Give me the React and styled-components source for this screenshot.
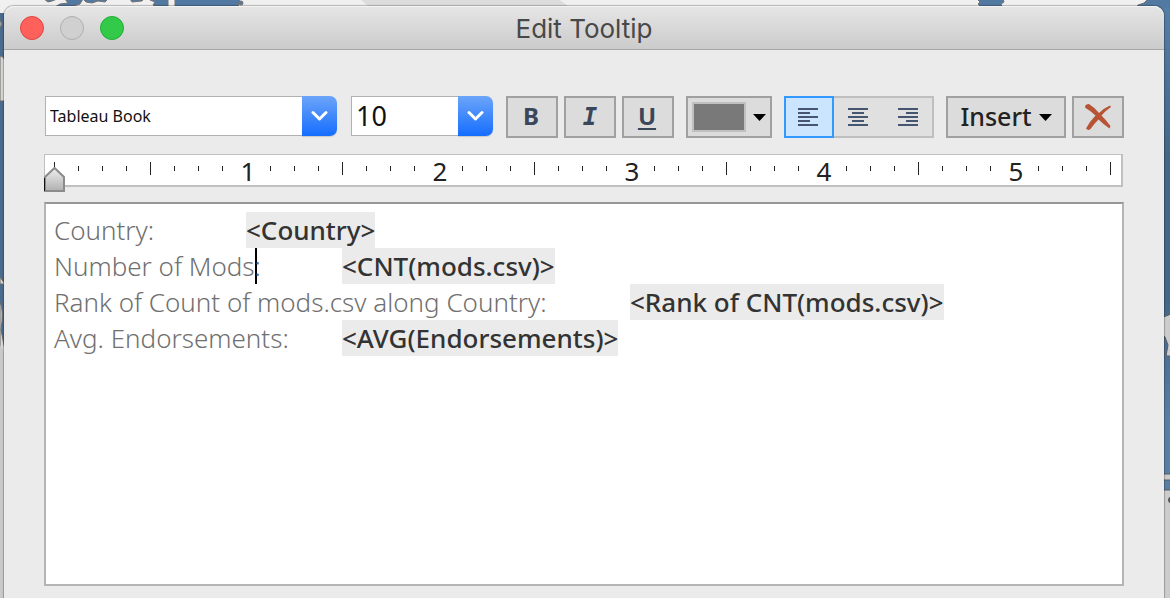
import React from "react";
import styled, { createGlobalStyle } from "styled-components";

const Global = createGlobalStyle`
  *, *::before, *::after { box-sizing: border-box; }
  body { margin: 0; background: #e2e2e2; font-family: "Noto Sans", "Open Sans", sans-serif; }
  button, input, select { font: inherit; color: inherit; margin: 0; }
`;

const Desktop = styled.div`
  position: relative;
  min-height: 100vh;
  padding: 6px 6px 0 4px;
  display: flex;
  overflow: hidden;
`;

const Backdrop = styled.svg`
  position: absolute;
  inset: 0;
  width: 100%;
  height: 100%;
`;

const Dialog = styled.main`
  position: relative;
  flex: 1;
  min-width: 0;
  display: flex;
  flex-direction: column;
  background: #ebebeb;
  border-radius: 10px 10px 0 0;
  box-shadow: 0 0 1px 1px rgba(0, 0, 0, 0.25);
`;

const TitleBar = styled.header`
  display: grid;
  grid-template-columns: 1fr auto 1fr;
  align-items: center;
  height: 44px;
  padding: 0 16px;
  border-radius: 10px 10px 0 0;
  border-bottom: 1px solid #a8a8a8;
  background: linear-gradient(#e6e6e6, #cbcbcb);
  box-shadow: inset 0 1px 0 #f4f4f4;
`;

const Lights = styled.div`
  display: flex;
  gap: 16px;
`;

const Light = styled.button`
  width: 24px;
  height: 24px;
  padding: 0;
  border-radius: 50%;
  border: 1px solid ${(p) => p.$edge};
  background: ${(p) => p.$fill};
`;

const Title = styled.h1`
  margin: 0;
  padding-top: 2px;
  font: 400 26px/32px Inter, sans-serif;
  color: #484848;
`;

const Body = styled.div`
  flex: 1;
  display: flex;
  flex-direction: column;
  padding: 46px 40px 12px;
`;

const Toolbar = styled.div`
  display: flex;
  align-items: flex-start;
  gap: 6px;
  height: 42px;
  padding-left: 1px;
`;

const Group = styled.div`
  display: flex;
  gap: 6px;
  margin-left: ${(p) => p.$lead || 0}px;
`;

const Combo = styled.div`
  display: flex;
  flex: none;
  width: ${(p) => p.$width}px;
  height: 40px;
  margin-right: 8px;
`;

const ComboInput = styled.input`
  flex: 1;
  min-width: 0;
  padding: 0 4px 1px;
  border: 1px solid #b1b1b1;
  border-right: 0;
  border-radius: 0;
  background: #fff;
  color: #111;
  font-size: ${(p) => p.$size}px;
  outline: 0;
`;

const ComboArrow = styled.button`
  display: grid;
  place-items: center;
  width: 35px;
  padding: 0;
  border: 0;
  border-radius: 0 7px 7px 0;
  background: linear-gradient(#6ca5f9, #156dfe);
  box-shadow: 0 1px 1px rgba(0, 0, 0, 0.15);
`;

const ToolButton = styled.button`
  display: flex;
  flex: none;
  align-items: center;
  justify-content: center;
  gap: 7px;
  width: ${(p) => p.$width || 52}px;
  height: 42px;
  padding: 0;
  border: 2px solid #a0a0a0;
  background: #dcdcdc;
  color: #222;
  font-size: 25px;
  font-weight: 500;
  line-height: 32px;
`;

const Label = styled.span`
  padding-bottom: 2px;
`;

const Swatch = styled.span`
  width: 54px;
  height: 30px;
  border: 2px solid #c0c0c0;
  background: #797979;
`;

const Segments = styled.div`
  display: flex;
  flex: none;
  width: 150px;
  height: 42px;
  border: 2px solid #bfbfbf;
  background: #e0e0e0;
`;

const Segment = styled.button`
  display: grid;
  place-items: center;
  flex: none;
  width: 50px;
  height: 42px;
  margin: -2px 0 0 ${(p) => (p.$first ? -2 : 0)}px;
  padding: 0 2px 0 0;
  border: 2px solid ${(p) => (p.$on ? "#3399ff" : "transparent")};
  background: ${(p) => (p.$on ? "#cce5ff" : "transparent")};
`;

const Ruler = styled.div`
  position: relative;
  height: 33px;
  margin: 16px 1px 0 0;
  border: solid #c0c0c0;
  border-width: 1px 2px 2px 1px;
  background: #fff;
`;

const Ticks = styled.div`
  display: flex;
  height: 27px;
  padding-left: 9px;
`;

const Tick = styled.span`
  flex: 0 0 24px;
  display: flex;
  align-items: center;
  &:last-child {
    flex-basis: 1px;
  }
  &::before {
    content: "";
    width: 1px;
    height: ${(p) => (p.$tall ? 13 : 5)}px;
    background: #222;
  }
`;

const Inch = styled.span`
  flex: 0 0 24px;
  display: flex;
  justify-content: center;
  margin-left: -10px;
  margin-right: 10px;
  color: #222;
  font-size: 26px;
  line-height: 32px;
`;

const Marker = styled.svg`
  position: absolute;
  left: -1px;
  top: 11px;
`;

const Editor = styled.div`
  flex: 1;
  margin-top: 15px;
  padding: 8px 8px;
  border: 2px solid #b5b5b5;
  border-top-color: #969696;
  background: #fff;
  color: #707070;
  font-size: 26px;
  font-weight: 300;
  line-height: 36px;
  outline: 0;
`;

const Line = styled.p`
  margin: 0;
  white-space: pre;
  tab-size: 96px;
`;

const Field = styled.span`
  display: inline-block;
  height: 36px;
  background: #ebebeb;
  color: #333;
  font-weight: 500;
  vertical-align: top;
`;

const Caret = styled.span`
  display: inline-block;
  width: 2px;
  height: 36px;
  margin-right: -2px;
  background: #000;
  vertical-align: top;
`;

const Chevron = () => (
  <svg width="17" height="12" viewBox="0 0 17 12" fill="none" stroke="#fff" strokeWidth="3" strokeLinecap="round" strokeLinejoin="round">
    <path d="M2 2.5 8.500 9 15 2.500" />
  </svg>
);

const Triangle = () => (
  <svg width="13" height="7" viewBox="0 0 13 7">
    <path d="M0 0H13L6.500 7Z" fill="#000" />
  </svg>
);

const Letter = styled.span`
  padding: 0 ${(p) => (p.$italic ? 0 : 2)}px ${(p) => (p.$italic ? 0 : 2)}px 0;
  color: #3a4659;
  font: ${(p) => (p.$italic ? "italic" : "normal")} 700 24px/30px "${(p) => (p.$italic ? "DejaVu Sans Mono" : "Noto Sans")}", sans-serif;
  text-decoration: ${(p) => (p.$underline ? "underline 2px" : "none")};
  text-underline-offset: 3px;
`;

const alignBars = {
  left: [[0, 20], [0, 12], [0, 20], [0, 12], [0, 20]],
  center: [[0, 20], [4, 12], [0, 20], [4, 12], [0, 20]],
  right: [[0, 20], [8, 12], [0, 20], [8, 12], [0, 20]],
};

const AlignIcon = ({ kind }) => (
  <svg width="20" height="18" viewBox="0 0 20 18" fill="#475670">
    {alignBars[kind].map(([x, w], i) => (
      <rect key={i} x={x} y={i * 4} width={w} height="2" />
    ))}
  </svg>
);

const MapArt = () => (
  <Backdrop viewBox="0 0 1170 598" preserveAspectRatio="none" aria-hidden="true">
    <defs>
      <linearGradient id="sea" x1="0" y1="0" x2="0" y2="1">
        <stop offset="0" stopColor="#557da5" />
        <stop offset="0.25" stopColor="#456687" />
        <stop offset="0.5" stopColor="#456687" />
        <stop offset="0.7" stopColor="#587ea3" />
        <stop offset="1" stopColor="#587ea3" />
      </linearGradient>
    </defs>
    <rect width="1170" height="598" fill="#f0f0f0" />
    <path d="M361 0H560L568 6H368Z" fill="#dcdcdc" />
    <g fill="#5279a1" stroke="#77716b" strokeWidth="1">
      <path d="M44 -1 48 2 52 1 57 -1ZM65 -1 68 3 60 4 55 7H70L80 4 83 -1ZM83 -1 86 2 92 3 98 1 105 2 108 -1ZM130 -1 132 2 142 1 144 -1ZM150 0 155 2 153 5 160 7H168V-1H158ZM175 -1V7H238L240 -1Z" />
      <circle cx="241" cy="3" r="2" />
      <path d="M977 -1 980 2 978 4 981 7H1002L1001 4 1004 2 1003 -1Z" />
      <path d="M1148 -1 1144 3 1138 5 1136 8H1150V12H1170V-1Z" />
    </g>
    <rect x="1150" y="8" width="20" height="590" fill="url(#sea)" />
    <path d="M0 13H6V352L0 345Z" fill="#4a6b8e" />
    <path d="M0 20 2 24 0 28ZM0 56Q4 56 5 62V101H0ZM0 277 5 284H0ZM0 302Q4 310 1 330L5 350V402H0Z" fill="#d5d5d2" stroke="#6b6b6b" />
    <path d="M0 345 6 356V598H0Z" fill="#c9c9c9" />
    <path d="M1171 314 1166 316 1160 318V333L1165 337 1168 345 1166 356H1171ZM1160 474H1171V480H1160ZM1160 490H1171V599H1160Z" fill="#cccccc" stroke="#5c5c5c" />
    <circle cx="1171" cy="500" r="3" fill="#555" />
  </Backdrop>
);

const ticks = Array.from({ length: 45 }, (_, i) => i);

export default function App() {
  return (
    <>
      <Global />
      <Desktop>
        <MapArt />
        <Dialog>
          <TitleBar>
            <Lights>
              <Light $fill="#fe605c" $edge="#e2443f" aria-label="Close" />
              <Light $fill="#d0d0d0" $edge="#aeaeae" aria-label="Minimize" />
              <Light $fill="#34ca49" $edge="#20ac33" aria-label="Zoom" />
            </Lights>
            <Title>Edit Tooltip</Title>
          </TitleBar>
          <Body>
            <Toolbar>
              <Combo $width={292}>
                <ComboInput aria-label="Font" defaultValue="Tableau Book" $size={16} />
                <ComboArrow aria-label="Choose font"><Chevron /></ComboArrow>
              </Combo>
              <Combo $width={142}>
                <ComboInput aria-label="Font size" defaultValue="10" $size={27} />
                <ComboArrow aria-label="Choose font size"><Chevron /></ComboArrow>
              </Combo>
              <Group $lead={-1}>
                <ToolButton aria-label="Bold"><Letter>B</Letter></ToolButton>
                <ToolButton aria-label="Italic"><Letter $italic>I</Letter></ToolButton>
                <ToolButton aria-label="Underline"><Letter $underline>U</Letter></ToolButton>
              </Group>
              <Group $lead={6}>
                <ToolButton $width={86} aria-label="Text color"><Swatch /><Triangle /></ToolButton>
              </Group>
              <Group $lead={6}>
                <Segments>
                  <Segment $first $on aria-label="Align left"><AlignIcon kind="left" /></Segment>
                  <Segment aria-label="Align center"><AlignIcon kind="center" /></Segment>
                  <Segment aria-label="Align right"><AlignIcon kind="right" /></Segment>
                </Segments>
              </Group>
              <Group $lead={6}>
                <ToolButton $width={120}><Label>Insert</Label><Triangle /></ToolButton>
                <ToolButton aria-label="Clear">
                  <svg width="26" height="27" viewBox="0 0 26 27" fill="#b85436">
                    <path d="M0 2Q1 0 4 0Q9 3 14 9Q19 4 25 1.500L26 3Q20 7 16.500 11.500Q21 16 25.500 22L24.500 24.500Q18 20 13.500 15.500Q9 20 5.500 25Q3 27 1 24.500Q5 17 10.500 11.500Q6 7 0.500 4Z" />
                  </svg>
                </ToolButton>
              </Group>
            </Toolbar>
            <Ruler>
              <Ticks>
                {ticks.map((i) =>
                  i % 8 === 0 && i > 0 ? (
                    <Inch key={i}>{i / 8}</Inch>
                  ) : (
                    <Tick key={i} $tall={i % 4 === 0} />
                  )
                )}
              </Ticks>
              <Marker width="21" height="27" viewBox="0 0 21 27">
                <defs>
                  <linearGradient id="marker" x1="0" y1="0" x2="0" y2="1">
                    <stop offset="0" stopColor="#efefef" />
                    <stop offset="1" stopColor="#b0b0b0" />
                  </linearGradient>
                </defs>
                <path d="M1 11 10.500 2 20 11V25H1Z" fill="url(#marker)" stroke="#8c8c8c" strokeWidth="2" />
                <path d="M0.500 12V25" stroke="#111" />
              </Marker>
            </Ruler>
            <Editor role="textbox" aria-multiline="true" aria-label="Tooltip text" contentEditable suppressContentEditableWarning spellCheck={false}>
              <Line>Country:{"\t"}<Field>&lt;Country&gt;</Field></Line>
              <Line>Number of Mods<Caret />:{"\t"}<Field>&lt;CNT(mods.csv)&gt;</Field></Line>
              <Line>Rank of Count of mods.csv along Country:{"\t"}<Field>&lt;Rank of CNT(mods.csv)&gt;</Field></Line>
              <Line>Avg. Endorsements:{"\t"}<Field>&lt;AVG(Endorsements)&gt;</Field></Line>
            </Editor>
          </Body>
        </Dialog>
      </Desktop>
    </>
  );
}
